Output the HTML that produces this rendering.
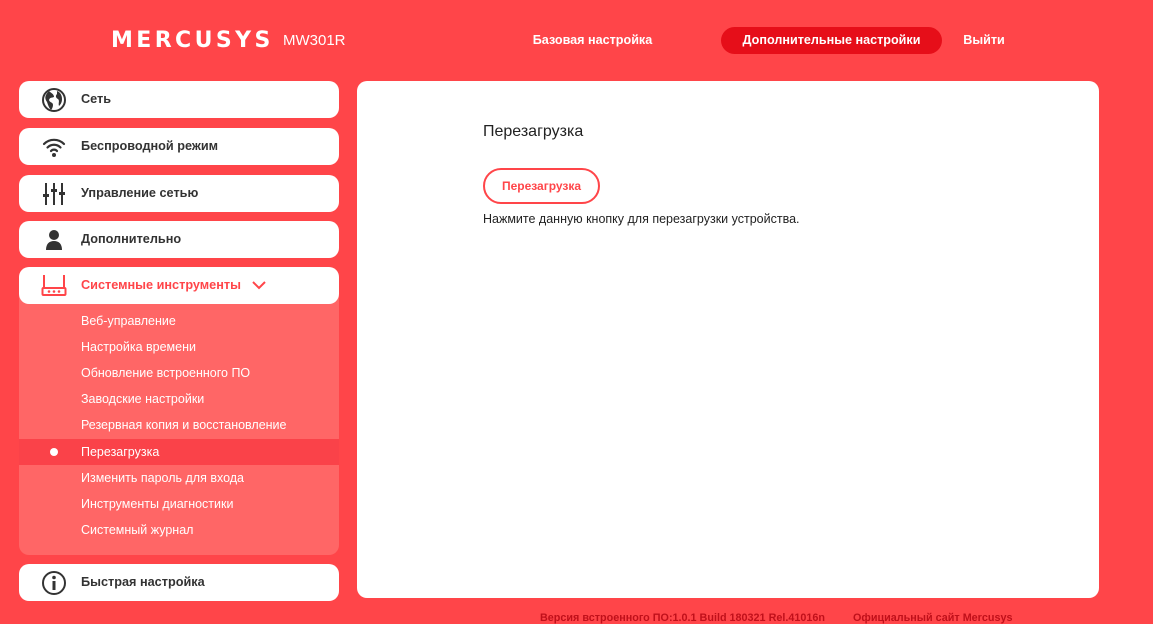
<!DOCTYPE html>
<html><head><meta charset="utf-8"><style>
*{margin:0;padding:0;box-sizing:border-box}
body{width:1153px;height:621px;overflow:hidden;background:#ff4549;font-family:"Liberation Sans",sans-serif;position:relative}
.logo{position:absolute;left:111px;top:28px;color:#fff;font-weight:bold;font-size:22px;letter-spacing:3.4px;font-family:"DejaVu Sans","Liberation Sans",sans-serif}
.model{position:absolute;left:283px;top:32px;color:#fff;font-size:15px}
.nav{position:absolute;top:27px;height:27px;line-height:27px;color:#fff;font-weight:bold;font-size:12.6px;text-align:center}
.item{position:absolute;left:19px;width:320px;height:37px;background:#fff;border-radius:10px;font-weight:bold;font-size:12.7px;color:#333;line-height:36px;padding-left:62px}
.item svg{position:absolute;left:22px;top:6px}
.sub{position:absolute;left:19px;top:296px;width:320px;height:259px;background:#ff6666;border-radius:0 0 10px 10px}
.sub div{position:absolute;left:0;width:320px;height:26px;line-height:26px;padding-left:62px;color:#fff;font-size:12.5px}
.panel{position:absolute;left:357px;top:81px;width:742px;height:517px;background:#fff;border-radius:10px}
</style></head><body>
<div class="logo">MERCUSYS</div>
<div class="model">MW301R</div>
<div class="nav" style="left:520px;width:145px">Базовая настройка</div>
<div class="nav" style="left:721px;width:221px;background:#e60e19;border-radius:14px">Дополнительные настройки</div>
<div class="nav" style="left:955px;width:58px">Выйти</div>

<div class="item" style="top:81px"><svg width="26" height="26" viewBox="0 0 26 26"><circle cx="13" cy="13" r="11" fill="none" stroke="#333" stroke-width="2"/><path d="M8 4c2 2 5 3 5 6-2 1-4 0-5 3 1 3 4 2 4 5 0 2-1 4-2 5-2-2-3-5-4-8-2-3-3-6 2-11zM16 4c3 1 5 4 5 8 0 3-1 5-3 7-1-3 1-5-1-7-2-1-3-3-1-5z" fill="#333"/></svg>Сеть</div>
<div class="item" style="top:128px"><svg width="26" height="26" viewBox="0 0 26 26"><path d="M3 10a14 14 0 0 1 20 0M6.5 13.5a9 9 0 0 1 13 0M10 17a4 4 0 0 1 6 0" fill="none" stroke="#333" stroke-width="2.2" stroke-linecap="round"/><circle cx="13" cy="21" r="2" fill="#333"/></svg>Беспроводной режим</div>
<div class="item" style="top:175px"><svg width="26" height="26" viewBox="0 0 26 26"><path d="M5 2v22M13 2v22M21 2v22" stroke="#333" stroke-width="2"/><rect x="2" y="13" width="6" height="3" fill="#333"/><rect x="10" y="8" width="6" height="3" fill="#333"/><rect x="18" y="11" width="6" height="3" fill="#333"/></svg>Управление сетью</div>
<div class="item" style="top:221px"><svg width="26" height="26" viewBox="0 0 26 26"><circle cx="13" cy="8" r="5" fill="#333"/><path d="M5 23c0-6 3-9 8-9s8 3 8 9z" fill="#333"/></svg>Дополнительно</div>
<div class="sub">
<div style="top:12px">Веб-управление</div>
<div style="top:38px">Настройка времени</div>
<div style="top:64px">Обновление встроенного ПО</div>
<div style="top:90px">Заводские настройки</div>
<div style="top:116px">Резервная копия и восстановление</div>
<div style="top:143px;background:#fa4249">Перезагрузка<span style="position:absolute;left:31px;top:9px;width:8px;height:8px;border-radius:50%;background:#fff"></span></div>
<div style="top:169px">Изменить пароль для входа</div>
<div style="top:195px">Инструменты диагностики</div>
<div style="top:221px">Системный журнал</div>
</div>
<div class="item" style="top:267px;color:#ff4549"><svg width="26" height="26" viewBox="0 0 26 26"><path d="M3 2v13M23 2v13" stroke="#ff4549" stroke-width="2"/><rect x="1.5" y="15" width="23" height="7" rx="1" fill="none" stroke="#ff4549" stroke-width="2"/><circle cx="8" cy="18.5" r="1.3" fill="#ff4549"/><circle cx="13" cy="18.5" r="1.3" fill="#ff4549"/><circle cx="18" cy="18.5" r="1.3" fill="#ff4549"/></svg>Системные инструменты<svg style="left:233px;top:13px" width="14" height="10" viewBox="0 0 14 10"><path d="M1 2l6 6 6-6" fill="none" stroke="#ff4549" stroke-width="2"/></svg></div>
<div class="item" style="top:564px"><svg width="26" height="26" viewBox="0 0 26 26"><circle cx="13" cy="13" r="11" fill="none" stroke="#333" stroke-width="2"/><circle cx="13" cy="7.5" r="1.8" fill="#333"/><rect x="11.5" y="11" width="3" height="9" fill="#333"/></svg>Быстрая настройка</div>

<div class="panel">
<div style="position:absolute;left:126px;top:42px;font-size:16px;color:#222">Перезагрузка</div>
<div style="position:absolute;left:126px;top:87px;width:117px;height:36px;border:2px solid #ff4549;border-radius:18px;color:#ff4549;font-weight:bold;font-size:12px;text-align:center;line-height:32px">Перезагрузка</div>
<div style="position:absolute;left:126px;top:131px;font-size:12.5px;color:#222">Нажмите данную кнопку для перезагрузки устройства.</div>
</div>
<div style="position:absolute;left:540px;top:612px;font-size:10.8px;color:#c0101a;font-weight:bold;white-space:nowrap">Версия встроенного ПО:1.0.1 Build 180321 Rel.41016n<span style="margin-left:28px">Официальный сайт Mercusys</span></div>
</body></html>
